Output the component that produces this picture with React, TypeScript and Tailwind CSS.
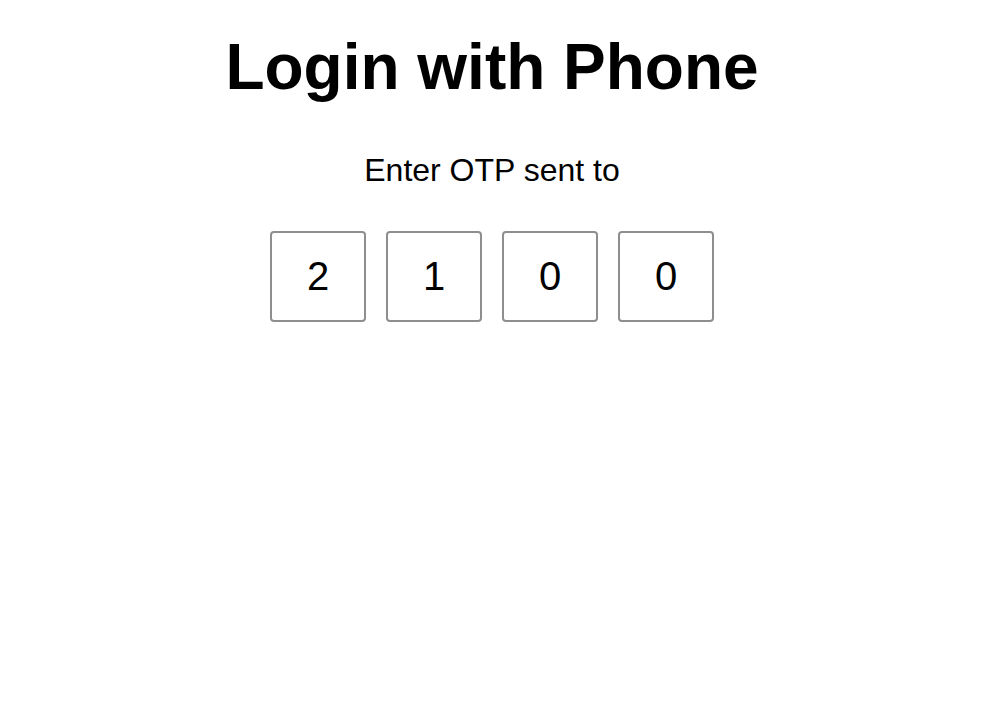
import { useState } from "react";

export default function App() {
  const [otp, setOtp] = useState(["2", "1", "0", "0"]);

  const handleChange = (i: number, v: string) => {
    const next = [...otp];
    next[i] = v.slice(-1);
    setOtp(next);
  };

  return (
    <div className="min-h-screen bg-white font-['Liberation_Sans',Arial,sans-serif] text-black">
      <div className="w-[984px] flex flex-col items-center pt-[31px]">
        <h1 className="text-[64px] leading-[1.15] font-bold">Login with Phone</h1>
        <p className="mt-[47px] text-[32px] leading-[1.15]">Enter OTP sent to</p>
        <div className="mt-[43px] flex gap-[20px]">
          {otp.map((d, i) => (
            <input
              key={i}
              value={d}
              onChange={(e) => handleChange(i, e.target.value)}
              inputMode="numeric"
              className="w-[96px] h-[91px] border-2 border-[#8e8e8e] rounded-[4px] text-center text-[40px] outline-none"
            />
          ))}
        </div>
      </div>
    </div>
  );
}
